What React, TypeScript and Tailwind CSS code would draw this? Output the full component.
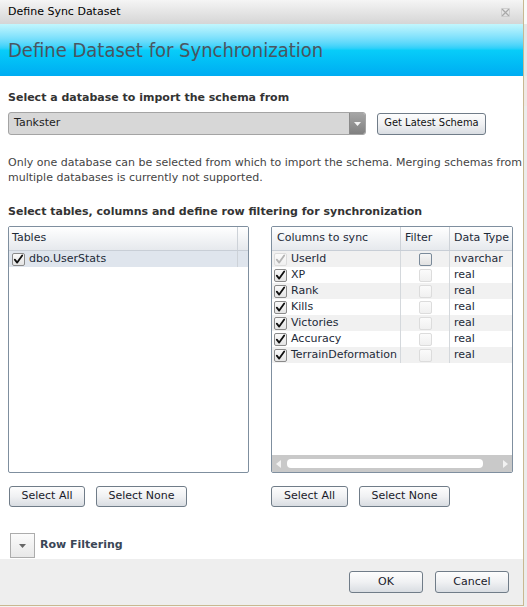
import React from "react";

const font = { fontFamily: '"DejaVu Sans", Verdana, sans-serif' };

function Check({ checked = true, disabled = false, strong = false }: { checked?: boolean; disabled?: boolean; strong?: boolean }) {
  return (
    <div
      className={
        "w-[13px] h-[13px] shrink-0 rounded-[2px] border flex items-center justify-center " +
        (disabled
          ? strong
            ? "border-[#7a8a9a] bg-gradient-to-b from-[#f6f6f6] to-[#e2e2e2]"
            : "border-[#dcdcdc] bg-gradient-to-b from-[#fbfbfb] to-[#f0f0f0]"
          : "border-[#8a8a8a] bg-gradient-to-b from-[#fafafa] to-[#e4e4e4]")
      }
    >
      {checked && (
        <svg width="11" height="11" viewBox="0 0 11 11">
          <path
            d="M1.8 5.6 L4.2 8.6 L9.2 1.4"
            fill="none"
            stroke={disabled ? "#b4b4b4" : "#111"}
            strokeWidth="1.8"
            strokeLinecap="round"
            strokeLinejoin="round"
          />
        </svg>
      )}
    </div>
  );
}

function Btn({ children, className = "" }: { children: React.ReactNode; className?: string }) {
  return (
    <button
      className={
        "h-[21px] rounded-[3px] border border-[#707c88] bg-gradient-to-b from-[#fdfdfd] via-[#f0f1f3] to-[#d9dde2] text-[#1a1a2a] flex items-center justify-center whitespace-nowrap " +
        className
      }
    >
      {children}
    </button>
  );
}

const columns = [
  { name: "UserId", type: "nvarchar", locked: true },
  { name: "XP", type: "real" },
  { name: "Rank", type: "real" },
  { name: "Kills", type: "real" },
  { name: "Victories", type: "real" },
  { name: "Accuracy", type: "real" },
  { name: "TerrainDeformation", type: "real" },
];

export default function App() {
  return (
    <div className="w-[527px] h-[607px] bg-[#f4f4f4] flex overflow-hidden" style={font}>
      <div className="w-[524px] h-[606px] flex flex-col bg-white border-r border-b border-r-[#c9b890] border-b-[#c9b890] shrink-0">
        {/* title bar */}
        <div className="h-[24px] shrink-0 bg-gradient-to-b from-[#f5f5f5] to-[#d5d5d5] flex items-center justify-between pl-[8px] pr-[13px]">
          <span className="text-[11px] text-black">Define Sync Dataset</span>
          <svg width="9" height="9" viewBox="0 0 9 9">
            <path d="M1 1 L8 8 M8 1 L1 8" stroke="#a8a8a8" strokeWidth="1.2" />
            <path d="M0.5 0.5 H8.5 V8.5 H0.5 Z" fill="none" stroke="#c8c8c8" strokeWidth="0.8" />
          </svg>
        </div>
        {/* banner */}
        <div className="h-[52px] shrink-0 bg-gradient-to-b from-[#c2f6fd] via-[#08cdf9] to-[#00acf2] flex items-center pl-[8px]">
          <span className="text-[20px] text-[#4b5560] font-stretch-condensed">Define Dataset for Synchronization</span>
        </div>

        <div className="flex flex-col px-[8px] pt-[15px] flex-1">
          <div className="text-[11px] font-bold text-[#333] leading-[14px]">Select a database to import the schema from</div>
          <div className="flex items-center mt-[7px] gap-[11px]">
            <div className="w-[358px] h-[23px] rounded-[3px] border border-[#a4a4a4] bg-[#d7d7d7] flex items-center justify-between overflow-hidden">
              <span className="text-[11px] text-[#222] pl-[5px]">Tankster</span>
              <div className="w-[16px] h-[21px] bg-gradient-to-b from-[#a6a6a6] to-[#808080] flex items-center justify-center border-l border-[#8a8a8a] rounded-r-[2px]">
                <svg width="7" height="4" viewBox="0 0 7 4">
                  <path d="M0 0 H7 L3.5 4 Z" fill="#f4f4f4" />
                </svg>
              </div>
            </div>
            <Btn className="w-[109px] h-[22px] border-[#3c4c5c] text-[#111] text-[11px] font-stretch-semi-condensed">Get Latest Schema</Btn>
          </div>

          <p className="text-[11px] text-[#444] leading-[15px] mt-[20px] whitespace-nowrap">
            Only one database can be selected from which to import the schema. Merging schemas from
            <br />
            multiple databases is currently not supported.
          </p>

          <div className="text-[11px] font-bold text-[#333] leading-[14px] mt-[20px]">
            Select tables, columns and define row filtering for synchronization
          </div>

          <div className="flex mt-[7px] gap-[22px]">
            {/* tables grid */}
            <div className="w-[241px] flex flex-col">
              <div className="h-[247px] rounded-[2px] border border-[#7f8f9f] flex flex-col overflow-hidden">
                <div className="h-[24px] flex bg-gradient-to-b from-[#ffffff] to-[#e6e9ed] border-b border-[#c8ced6]">
                  <div className="w-[229px] border-r border-[#cdd2d8] flex items-center pl-[3px] text-[11px] text-[#1d2a38]">Tables</div>
                  <div className="flex-1" />
                </div>
                <div className="h-[16px] flex bg-[#dfe5ed]">
                  <div className="w-[229px] border-r border-[#cdd2d8] flex items-center gap-[4px] pl-[3px]">
                    <Check />
                    <span className="text-[11px] text-[#1d2a38]">dbo.UserStats</span>
                  </div>
                </div>
              </div>
              <div className="flex gap-[11px] mt-[13px] pl-[1px]">
                <Btn className="w-[76px] text-[11px]">Select All</Btn>
                <Btn className="w-[91px] text-[11px]">Select None</Btn>
              </div>
            </div>

            {/* columns grid */}
            <div className="w-[242px] flex flex-col">
              <div className="h-[247px] rounded-[2px] border border-[#7f8f9f] flex flex-col overflow-hidden">
                <div className="h-[24px] flex bg-gradient-to-b from-[#ffffff] to-[#e6e9ed] border-b border-[#c8ced6] shrink-0">
                  <div className="w-[129px] border-r border-[#cdd2d8] flex items-center pl-[5px] text-[11px] text-[#1d2a38]">Columns to sync</div>
                  <div className="w-[49px] border-r border-[#cdd2d8] flex items-center pl-[4px] text-[11px] text-[#1d2a38]">Filter</div>
                  <div className="flex-1 flex items-center pl-[4px] text-[11px] text-[#1d2a38] whitespace-nowrap overflow-hidden">Data Type</div>
                </div>
                {columns.map((c, i) => (
                  <div key={c.name} className={"h-[16px] flex shrink-0 " + (i % 2 === 0 ? "bg-[#f1f1f1]" : "bg-white")}>
                    <div className="w-[129px] border-r border-[#d4d8dc] flex items-center gap-[4px] pl-[2px] overflow-hidden">
                      <Check disabled={c.locked} />
                      <span className="text-[11px] text-[#1d2a38] whitespace-nowrap">{c.name}</span>
                    </div>
                    <div className="w-[49px] border-r border-[#d4d8dc] flex items-center justify-center">
                      <Check checked={false} disabled strong={c.locked} />
                    </div>
                    <div className="flex-1 flex items-center pl-[4px] text-[11px] text-[#1d2a38]">{c.type}</div>
                  </div>
                ))}
                <div className="flex-1" />
                {/* horizontal scrollbar */}
                <div className="h-[17px] bg-[#c9c9c9] flex items-center px-[4px] gap-[6px] shrink-0">
                  <svg width="5" height="8" viewBox="0 0 5 8">
                    <path d="M5 0 V8 L0 4 Z" fill="#f2f2f2" />
                  </svg>
                  <div className="w-[196px] h-[9px] rounded-[4px] bg-white" />
                  <div className="flex-1" />
                  <svg width="5" height="8" viewBox="0 0 5 8">
                    <path d="M0 0 V8 L5 4 Z" fill="#f2f2f2" />
                  </svg>
                </div>
              </div>
              <div className="flex gap-[11px] mt-[13px]">
                <Btn className="w-[77px] text-[11px]">Select All</Btn>
                <Btn className="w-[91px] text-[11px]">Select None</Btn>
              </div>
            </div>
          </div>

          {/* row filtering expander */}
          <div className="flex items-center gap-[5px] mt-[26px] pl-[2px]">
            <div className="w-[25px] h-[25px] border border-[#acacac] bg-gradient-to-b from-[#fbfbfb] to-[#e8e8e8] flex items-center justify-center">
              <svg width="7" height="4" viewBox="0 0 7 4">
                <path d="M0 0 H7 L3.5 4 Z" fill="#666" />
              </svg>
            </div>
            <span className="text-[11px] font-bold text-[#3a4656]">Row Filtering</span>
          </div>
        </div>

        {/* footer */}
        <div className="h-[46px] shrink-0 bg-[#eeeeee] flex items-center justify-end gap-[12px] pr-[14px]">
          <Btn className="w-[74px] h-[22px] text-[11px]">OK</Btn>
          <Btn className="w-[74px] h-[22px] text-[11px]">Cancel</Btn>
        </div>
      </div>
      <div className="flex-1 flex flex-col">
        <div className="h-[24px] bg-[#fafafa]" />
        <div className="h-[52px] bg-[#e6e6e6]" />
        <div className="h-[30px] bg-[#f0e8e6]" />
        <div className="flex-1 bg-[#ececec]" />
      </div>
    </div>
  );
}
